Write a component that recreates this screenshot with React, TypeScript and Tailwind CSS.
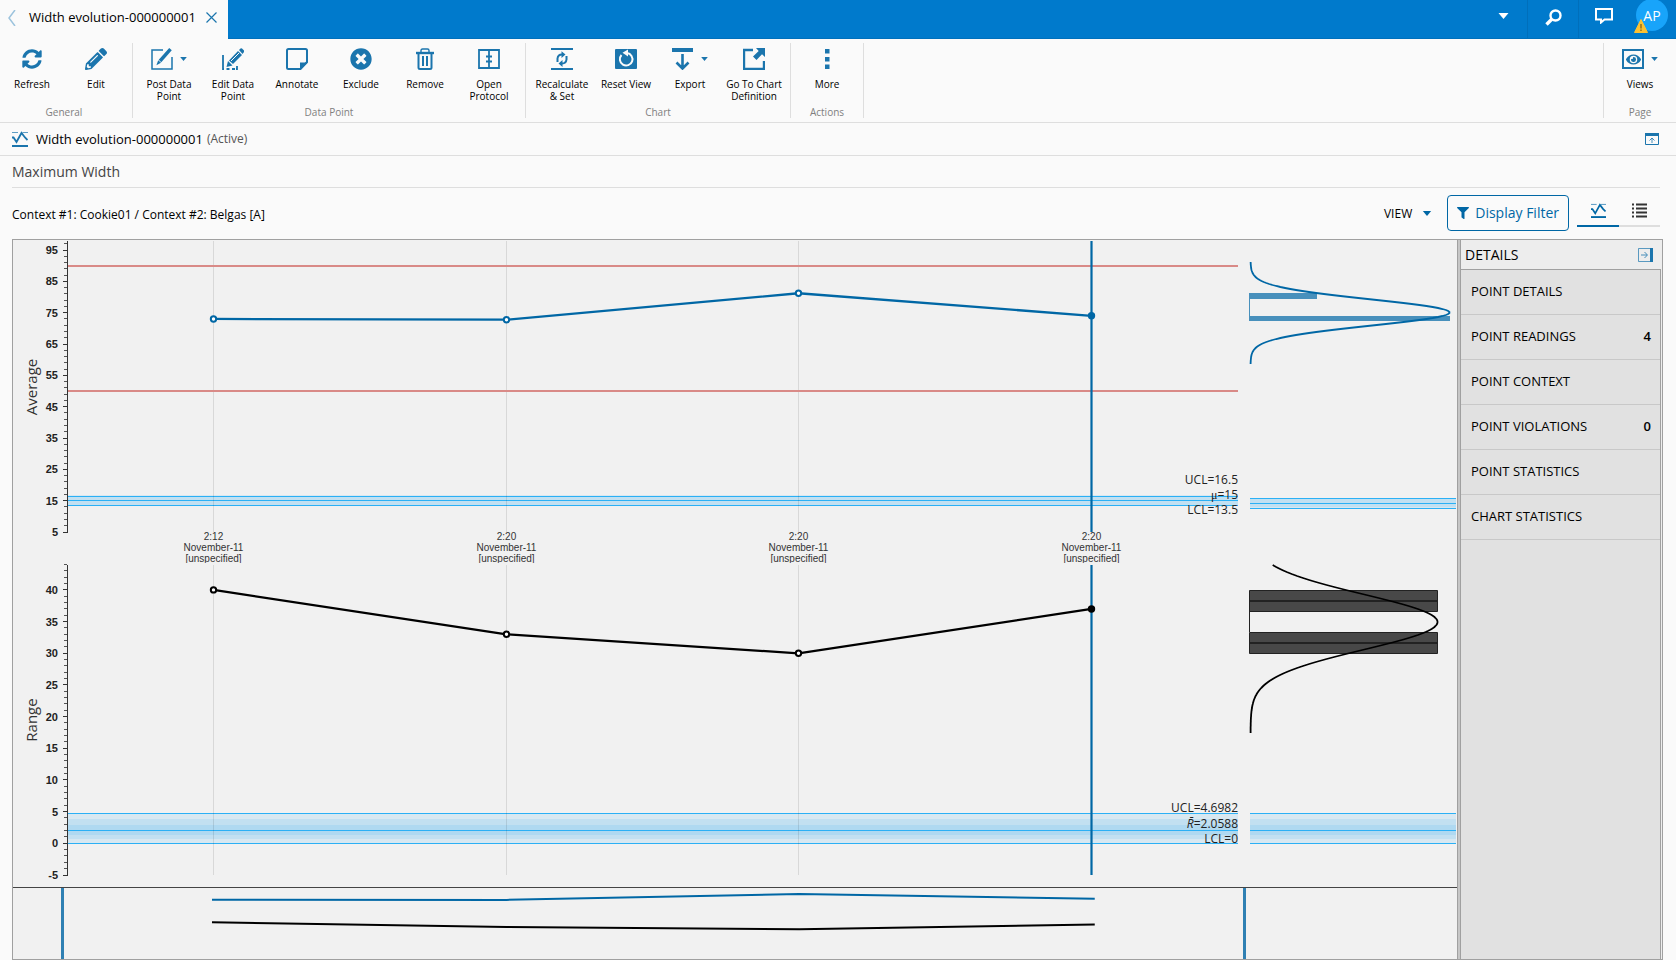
import { useLayoutEffect, useRef, useState } from "react";
import type { ReactNode } from "react";
import { FaEye, FaFilter, FaPencilAlt, FaSyncAlt, FaTimesCircle } from "react-icons/fa";

const BLUE = "#0067a5";
const BAND = "#2bb0f5";

type Tool = { label: string; icon: ReactNode; menu?: boolean };
type Group = { name: string; tools: Tool[] };

function Svg({ children, size = 22 }: { children: ReactNode; size?: number }) {
  return (
    <svg width={size} height={size} viewBox="0 0 22 22" fill="none" stroke="currentColor" strokeWidth="2" aria-hidden="true">
      {children}
    </svg>
  );
}

function Caret({ className }: { className: string }) {
  return (
    <svg className={className} viewBox="0 0 10 6" fill="currentColor" aria-hidden="true">
      <path d="M0 0h10L5 6z" />
    </svg>
  );
}

const PostIcon = (
  <Svg>
    <path d="M12 2H1v19h20V9" strokeWidth="1.5" />
    <path d="M19.5 1.2 9 13" strokeWidth="3.4" />
    <path d="m7.2 12.2 2.8 2.5-4.6 2.6z" fill="currentColor" stroke="none" />
  </Svg>
);

const EditPointIcon = (
  <Svg>
    <path d="M1 7v14h1M4.500 21h3M10 21h3M15 18v3h-1M1 14v1" strokeWidth="1.800" />
    <path d="M7 12.500 16 3l4 4-9 9z" fill="currentColor" stroke="none" />
    <path d="m17 2 1.500-1.500q.7-.5 1.500 0l2 2q.6.8 0 1.500L20.500 6z" fill="currentColor" stroke="none" />
    <path d="m6 13 4.500 4.500L4.500 19z" fill="currentColor" stroke="none" />
    <path d="m9 13 8-8" stroke="#fafafa" strokeWidth="1" />
  </Svg>
);

const NoteIcon = (
  <Svg>
    <path d="M14.500 21H2.500q-1.500 0-1.500-1.500v-17Q1 1 2.500 1h17Q21 1 21 2.500V14z" />
    <path d="M14 22v-7.500h8z" fill="currentColor" stroke="none" />
  </Svg>
);

const TrashIcon = (
  <Svg>
    <path d="M2 5h18" strokeWidth="2.400" />
    <path d="M7 4V2.500Q7 1 8.500 1h5Q15 1 15 2.500V4" strokeWidth="1.400" />
    <path d="M4.500 5v14.500q0 1.500 1.500 1.500h10q1.500 0 1.500-1.500V5M9 8v10M13 8v10" />
  </Svg>
);

const ProtocolIcon = (
  <Svg>
    <path d="M1 2h20v18H1zM11 2v18" strokeWidth="1.800" />
    <path d="M8 8.500h6M8 13.500h6" />
  </Svg>
);

const RecalcIcon = (
  <Svg>
    <path d="M0 1h22M0 21h22" />
    <path d="M6.500 14V10.500Q7 6.500 11 6.500M15.500 8v3.500Q15 15.500 11 15.500" />
    <path d="M10.500 3.200 14.500 6.500l-4 3.500zM11.500 12v7l-4-3.500z" fill="currentColor" stroke="none" />
  </Svg>
);

const ResetIcon = (
  <Svg>
    <path d="M0 2q0-1 1-1h20q1 0 1 1v18q0 1-1 1H1q-1 0-1-1z" fill="currentColor" stroke="none" />
    <path d="M6.500 7a6.300 6.300 0 1 0 5.500-2" stroke="#fafafa" />
    <path d="m13 1.500-5.500 3.200L13 8.500z" fill="#fafafa" stroke="none" />
  </Svg>
);

const ExportIcon = (
  <Svg>
    <path d="M0 2h21" strokeWidth="4" />
    <path d="M10.500 6v14M4.500 14.500l6 6 6-6" strokeWidth="2.600" />
  </Svg>
);

const GoToIcon = (
  <Svg>
    <path d="M10 2H1v19h20V13" strokeWidth="2.400" />
    <path d="M13 0h9v9l-3-2.700-5.500 5.700-3.500-3.500L15.700 3z" fill="currentColor" stroke="none" />
  </Svg>
);

const MoreIcon = (
  <Svg>
    <path d="M9 1h4.500v4.500H9zM9 9h4.500v4.500H9zM9 16.500h4.500V21H9z" fill="currentColor" stroke="none" />
  </Svg>
);

const EyeIcon = (
  <span className="flex h-5 w-[22px] items-center justify-center border-2 border-current">
    <FaEye size={15} />
  </span>
);

const groups: Group[] = [
  {
    name: "General",
    tools: [
      { label: "Refresh", icon: <FaSyncAlt size={20} /> },
      { label: "Edit", icon: <FaPencilAlt size={22} /> },
    ],
  },
  {
    name: "Data Point",
    tools: [
      { label: "Post Data Point", icon: PostIcon, menu: true },
      { label: "Edit Data Point", icon: EditPointIcon },
      { label: "Annotate", icon: NoteIcon },
      { label: "Exclude", icon: <FaTimesCircle size={22} /> },
      { label: "Remove", icon: TrashIcon },
      { label: "Open Protocol", icon: ProtocolIcon },
    ],
  },
  {
    name: "Chart",
    tools: [
      { label: "Recalculate & Set", icon: RecalcIcon },
      { label: "Reset View", icon: ResetIcon },
      { label: "Export", icon: ExportIcon, menu: true },
      { label: "Go To Chart Definition", icon: GoToIcon },
    ],
  },
  { name: "Actions", tools: [{ label: "More", icon: MoreIcon }] },
];

const details = [
  { label: "POINT DETAILS" },
  { label: "POINT READINGS", count: 4 },
  { label: "POINT CONTEXT" },
  { label: "POINT VIOLATIONS", count: 0 },
  { label: "POINT STATISTICS" },
  { label: "CHART STATISTICS" },
];

function ToolGroup({ group }: { group: Group }) {
  return (
    <div className="flex h-[75px] flex-col justify-between px-1">
      <div className="flex">
        {group.tools.map((t) => (
          <button key={t.label} className="flex w-16 flex-col items-center pt-[5px]">
            <span className="flex h-[22px] items-center gap-[7px] text-[#1b75ad]">
              {t.icon}
              {t.menu && <Caret className="h-1 w-[7px]" />}
            </span>
            <span className="mt-2 px-1 text-center text-[10px] leading-3 text-black">{t.label}</span>
          </button>
        ))}
      </div>
      <div className="text-center text-[10px] leading-[11px] text-[#808080]">{group.name}</div>
    </div>
  );
}

function ChartIcon({ className }: { className: string }) {
  return (
    <svg className={className} viewBox="0 0 16 16" fill="none" stroke="currentColor" aria-hidden="true">
      <path d="M0 1.500h6M10.500 1.500H16" strokeWidth="1" strokeOpacity="0.7" />
      <path d="M0 6.500h1.500l3 4.500 5-9 3.500 4.500 2.500 2.500" strokeWidth="1.800" />
      <path d="M0 15h16" strokeWidth="2" />
    </svg>
  );
}

function Header() {
  return (
    <header className="flex h-[39px] bg-[#007acc] text-white">
      <div className="flex w-[228px] items-center bg-[#fafafa] pb-1 pl-2 text-[#1b75ad]">
        <button aria-label="Previous tab" className="text-[#9cc3dd]">
          <svg className="h-4 w-2" viewBox="0 0 8 16" fill="none" stroke="currentColor" strokeWidth="1.500">
            <path d="M7 0 1 8l6 8" />
          </svg>
        </button>
        <span className="ml-[13px] text-[13px] whitespace-nowrap text-black">Width evolution-000000001</span>
        <button aria-label="Close tab" className="ml-[10px]">
          <svg className="h-[11px] w-[11px]" viewBox="0 0 11 11" stroke="currentColor" strokeWidth="1.200">
            <path d="m.5.5 10 10M10.500.5l-10 10" />
          </svg>
        </button>
      </div>
      <div className="flex flex-1 justify-end border-b border-[#0070bc]">
        <button aria-label="Open menu" className="flex w-12 items-center justify-center pb-[6px]">
          <Caret className="h-[6px] w-[11px]" />
        </button>
        <button aria-label="Search" className="flex w-[52px] items-center justify-center border-x border-[#006fbb] pb-1">
          <svg className="h-[17px] w-[17px]" viewBox="0 0 17 17" fill="none" stroke="currentColor">
            <circle cx="10.500" cy="6.500" r="5" strokeWidth="2.400" />
            <path d="M7 10 1.500 15.500" strokeWidth="3.400" />
          </svg>
        </button>
        <button aria-label="Messages" className="flex w-[50px] items-center justify-center pb-[6px]">
          <svg className="h-4 w-[18px]" viewBox="0 0 18 16" fill="none" stroke="currentColor" strokeWidth="2">
            <path d="M1 1h16v10.500H9.500L6 14.500v-3H1z" />
          </svg>
        </button>
        <button aria-label="Account AP" className="relative -mt-px mr-2 ml-[7px] flex h-8 w-8 items-center justify-center rounded-full bg-[#18a4fa] text-[14px]">
          AP
          <svg className="absolute top-5 -left-0.5 h-[14px] w-[14px]" viewBox="0 0 14 14" aria-hidden="true">
            <path d="M7 .5 13.500 13.500H.5z" fill="#fdc132" stroke="#fdc132" strokeLinejoin="round" />
            <path d="M7 5v4.500M7 10.500V12" stroke="#8a6a1c" strokeWidth="1.400" />
          </svg>
        </button>
      </div>
    </header>
  );
}

function Toolbar() {
  return (
    <nav className="flex justify-between border-b border-[#dedede] pt-1 pb-1">
      <div className="-ml-1 flex">
        {groups.map((g) => (
          <div key={g.name} className="border-r border-[#dedede]">
            <ToolGroup group={g} />
          </div>
        ))}
      </div>
      <div className="border-l border-[#dedede]">
        <ToolGroup group={{ name: "Page", tools: [{ label: "Views", icon: EyeIcon, menu: true }] }} />
      </div>
    </nav>
  );
}

const avgY = (v: number) => 292 - (v - 5) * 3.1333;
const rangeY = (v: number) => 635 - (v + 5) * 6.335;
const average = [73, 72.75, 81.2, 74];
const range = [40, 33, 30, 37];
const times = ["2:12", "2:20", "2:20", "2:20"];

function bell(x0: number, amp: number, mid: number, sigma: number, from: number, to: number) {
  const pts: string[] = [];
  for (let y = from; y <= to; y += 1) {
    pts.push(`${(x0 + amp * Math.exp(-((y - mid) ** 2) / (2 * sigma * sigma))).toFixed(1)},${y}`);
  }
  return pts.join(" ");
}

type AxisProps = { title: string; top: number; bottom: number; scale: (v: number) => number; min: number; max: number; minor: number; major: number; titleY: number };

function Axis({ title, top, bottom, scale, min, max, minor, major, titleY }: AxisProps) {
  const ticks: number[] = [];
  for (let v = min; v <= max; v += minor) ticks.push(v);
  const labels: number[] = [];
  for (let v = min; v <= max; v += major) labels.push(v);
  return (
    <g>
      <path d={`M54.500 ${top}V${bottom}`} stroke="#333" />
      {ticks.map((v) => (
        <path key={v} d={`M51 ${Math.floor(scale(v)) + 0.5}h3`} stroke="#555" />
      ))}
      {labels.map((v) => (
        <g key={v}>
          <path d={`M50 ${Math.floor(scale(v)) + 0.5}h4`} stroke="#333" />
          <text x="45" y={Math.round(scale(v)) + 4} textAnchor="end" className="fill-[#222] font-['Liberation_Sans',sans-serif] text-[11px] font-bold">
            {v}
          </text>
        </g>
      ))}
      <text transform={`translate(24 ${titleY}) rotate(-90)`} textAnchor="middle" className="fill-[#333] text-[15px]">
        {title}
      </text>
    </g>
  );
}

function Bands({ x1, x2, stops, lines }: { x1: number; x2: number; stops: [number, number][]; lines: number[] }) {
  return (
    <g>
      {stops.map(([a, b]) => (
        <rect key={a} x={x1} width={x2 - x1} y={a} height={b - a} fill={BAND} opacity="0.12" />
      ))}
      {lines.map((y) => (
        <path key={y} d={`M${x1} ${y}H${x2}`} stroke={BAND} />
      ))}
    </g>
  );
}

function ControlCharts({ width }: { width: number }) {
  const right = width - 219;
  const hist = width - 207;
  const step = (right - 55) / 4;
  const px = (i: number) => Math.round(55 + step * (i + 0.5)) - 0.5;
  const line = (data: number[], y: (v: number) => number) => data.map((v, i) => `${px(i)},${y(v)}`).join(" ");
  const sel = px(3);

  return (
    <svg width={width} height="647" className="block" role="img" aria-label="Average and range control charts">
      <defs>
        <clipPath id="time-labels">
          <rect x="0" y="292" width={width} height="31" />
        </clipPath>
      </defs>

      {/* limit bands */}
      <Bands x1={55} x2={right} stops={[[255, 266], [257, 265]]} lines={[256.5, 260.5, 265.5]} />
      <Bands x1={hist} x2={width - 1} stops={[[258, 269], [259, 267]]} lines={[258.5, 263.5, 268.5]} />
      <Bands x1={55} x2={right} stops={[[573, 604], [579, 599], [585, 595]]} lines={[573.5, 590.5, 603.5]} />
      <Bands x1={hist} x2={width - 1} stops={[[573, 604], [579, 599], [585, 595]]} lines={[573.5, 590.5, 603.5]} />

      {/* grid */}
      {times.map((_, i) => (
        <path key={i} d={`M${px(i)} 1V292M${px(i)} 325V635`} stroke="#000" strokeOpacity="0.1" />
      ))}

      <path d={`M55 26H${right}`} stroke="#d98a87" strokeWidth="2" />
      <path d={`M55 151H${right}`} stroke="#d98a87" strokeWidth="2" />

      <Axis title="Average" top={1} bottom={293} scale={avgY} min={5} max={97} minor={2} major={10} titleY={147} />
      <Axis title="Range" top={325} bottom={636} scale={rangeY} min={-5} max={44} minor={1} major={5} titleY={480} />

      <g clipPath="url(#time-labels)">
        {times.map((t, i) => (
          <text key={i} textAnchor="middle" className="fill-[#333] font-['Liberation_Sans',sans-serif] text-[10px]">
            <tspan x={px(i)} y="300">{t}</tspan>
            <tspan x={px(i)} y="311">November-11</tspan>
            <tspan x={px(i)} y="322">[unspecified]</tspan>
          </text>
        ))}
      </g>

      {/* limits */}
      <g textAnchor="end" className="fill-[#222] text-[12px]">
        <text x={right} y="244">UCL=16.5</text>
        <text x={right} y="259"><tspan className="font-['Liberation_Serif',serif]">μ</tspan>=15</text>
        <text x={right} y="274">LCL=13.5</text>
        <text x={right} y="572">UCL=4.6982</text>
        <text x={right} y="588"><tspan className="italic">R̄</tspan>=2.0588</text>
        <text x={right} y="603">LCL=0</text>
      </g>

      {/* selected point */}
      <path d={`M${sel} 1V292M${sel} 325V635`} stroke={BLUE} strokeWidth="3" strokeOpacity="0.6" />
      <path d={`M${sel} 1V292M${sel} 325V635`} stroke={BLUE} strokeWidth="1" />

      <polyline points={line(average, avgY)} fill="none" stroke={BLUE} strokeWidth="2.300" />
      <polyline points={line(range, rangeY)} fill="none" stroke="#000" strokeWidth="2.300" />
      {average.map((v, i) => (
        <circle key={i} cx={px(i)} cy={avgY(v)} r="2.700" fill={i === 3 ? BLUE : "#fff"} stroke={BLUE} strokeWidth="2" />
      ))}
      {range.map((v, i) => (
        <circle key={i} cx={px(i)} cy={rangeY(v)} r="2.700" fill={i === 3 ? "#000" : "#fff"} stroke="#000" strokeWidth="2" />
      ))}

      {/* distributions */}
      <g fill={BLUE} fillOpacity="0.7">
        <rect x={hist - 1} y="53" width="68" height="6" />
        <rect x={hist - 1} y="76" width="201" height="5" />
        <path d={`M${hist - 0.5} 59V76`} stroke={BLUE} strokeOpacity="0.7" />
      </g>
      <polyline points={bell(hist + 0.5, 199, 72.5, 13.1, 22, 124)} fill="none" stroke={BLUE} strokeWidth="1.800" />
      <g fill="#484848" stroke="#222" strokeWidth="1">
        <path d={`M${hist - 0.5} 350.500h188v21h-188zM${hist - 0.5} 392.500h188v21h-188z`} />
        <path d={`M${hist - 1} 361h189M${hist - 1} 403h189`} strokeWidth="2" />
        <path d={`M${hist - 0.5} 371V392`} />
      </g>
      <polyline points={bell(hist + 0.5, 187, 382, 27.6, 325, 493)} fill="none" stroke="#000" strokeWidth="1.800" />
    </svg>
  );
}

function Overview({ width }: { width: number }) {
  const right = width - 219;
  const step = (right - 55) / 4;
  const xs = [199, 55 + step * 1.5, 55 + step * 2.5, 55 + step * 3.5 + 3];
  const pts = (ys: number[]) => ys.map((y, i) => `${xs[i]},${y}`).join(" ");
  return (
    <svg width={width} height="71" className="block" role="img" aria-label="Chart overview">
      <path d={`M49.500 0V71M${right + 6.5} 0V71`} stroke="#2f80b3" strokeWidth="3" />
      <polyline points={pts([11.7, 11.9, 6, 10.7])} fill="none" stroke={BLUE} strokeWidth="2" />
      <polyline points={pts([34.3, 39, 41.2, 36.5])} fill="none" stroke="#000" strokeWidth="2" />
    </svg>
  );
}

function ChartPanel() {
  const ref = useRef<HTMLDivElement>(null);
  const [width, setWidth] = useState(1200);

  useLayoutEffect(() => {
    const el = ref.current;
    if (!el) return;
    const update = () => setWidth(el.clientWidth);
    update();
    const ro = new ResizeObserver(update);
    ro.observe(el);
    return () => ro.disconnect();
  }, []);

  return (
    <div ref={ref} className="min-w-0 flex-1 overflow-hidden bg-[#f1f1f1]">
      <ControlCharts width={width} />
      <div className="border-t border-[#444]">
        <Overview width={width} />
      </div>
    </div>
  );
}

function DetailsPanel() {
  return (
    <aside className="flex w-[201px] shrink-0 flex-col bg-[#ededed] pr-px">
      <div className="flex h-[29px] items-center justify-between pr-2 pl-1">
        <h2 className="text-[14px] text-black">DETAILS</h2>
        <button aria-label="Collapse details" className="text-[#1b75ad]">
          <svg className="h-[14px] w-[15px]" viewBox="0 0 15 14" fill="none" stroke="currentColor">
            <path d="M12 .5H.5v13H12" strokeOpacity="0.7" />
            <path d="M13.500 0v14" strokeWidth="3" />
            <path d="M3 7h6M6.500 4l3 3-3 3" strokeOpacity="0.8" />
          </svg>
        </button>
      </div>
      <ul className="flex-1 border-t border-r border-[#a0a0a0] bg-[#e1e1e1]">
        {details.map((d) => (
          <li key={d.label} className="border-b border-[#c8c8c8]">
            <button className="flex h-11 w-full items-center justify-between pr-[9px] pl-[10px] text-[13px] text-black">
              <span>{d.label}</span>
              {d.count !== undefined && <span className="font-semibold">{d.count}</span>}
            </button>
          </li>
        ))}
      </ul>
    </aside>
  );
}

export default function App() {
  return (
    <div className="min-h-screen bg-[#fafafa] font-['Open_Sans',sans-serif] text-black">
      <Header />
      <Toolbar />

      <div className="flex h-[33px] items-center border-b border-[#dedede] pr-[17px] pl-3">
        <ChartIcon className="h-4 w-4 text-[#1b75ad]" />
        <h1 className="ml-2 pt-0.5 text-[13px]">Width evolution-000000001</h1>
        <span className="ml-1 text-[12px] text-[#555]">(Active)</span>
        <button aria-label="Collapse header" className="ml-auto text-[#1b75ad]">
          <svg className="h-3 w-[14px]" viewBox="0 0 14 12" fill="none" stroke="currentColor">
            <path d="M.5 1v10.500h13V1" />
            <path d="M0 1.500h14" strokeWidth="3" />
            <path d="M7 10V5M4.500 7.500 7 5l2.500 2.500" strokeOpacity="0.8" />
          </svg>
        </button>
      </div>

      <main className="pr-[13px] pl-3">
        <h2 className="mr-[3px] flex h-8 items-center border-b border-[#dedede] text-[14px] text-[#444]">Maximum Width</h2>

        <div className="flex h-[51px] items-center">
          <p className="pt-0.5 text-[12px]">Context #1: Cookie01 / Context #2: Belgas [A]</p>
          <button className="mr-[15px] ml-auto flex items-center gap-[10px] text-[12px]">
            VIEW
            <Caret className="h-[5px] w-[10px] text-[#0067a5]" />
          </button>
          <button className="mb-0.5 flex h-9 items-center gap-[6px] rounded border border-[#0067a5] px-[9px] text-[14px] whitespace-nowrap text-[#0067a5]">
            <FaFilter size={12} />
            Display Filter
          </button>
          <div className="mr-[3px] ml-2 flex self-end pb-3">
            <button aria-label="Chart view" className="flex h-7 w-[42px] items-center justify-center border-b-2 border-[#0067a5] pb-1 text-[#0067a5]">
              <ChartIcon className="h-[15px] w-[15px]" />
            </button>
            <button aria-label="List view" className="flex h-7 w-[41px] items-center justify-center border-b-2 border-[#dedede] pb-1 text-[#333]">
              <svg className="h-[15px] w-[15px]" viewBox="0 0 15 15" stroke="currentColor" strokeWidth="2">
                <path d="M0 1.500h2M0 5.500h2M0 9.500h2M0 13.500h2M4 1.500h11M4 5.500h11M4 9.500h11M4 13.500h11" />
              </svg>
            </button>
          </div>
        </div>

        <div className="flex border border-[#a0a0a0]">
          <ChartPanel />
          <div className="w-1 shrink-0 border-x border-[#a0a0a0] bg-[#c6c6c6]" />
          <DetailsPanel />
        </div>
      </main>
    </div>
  );
}
